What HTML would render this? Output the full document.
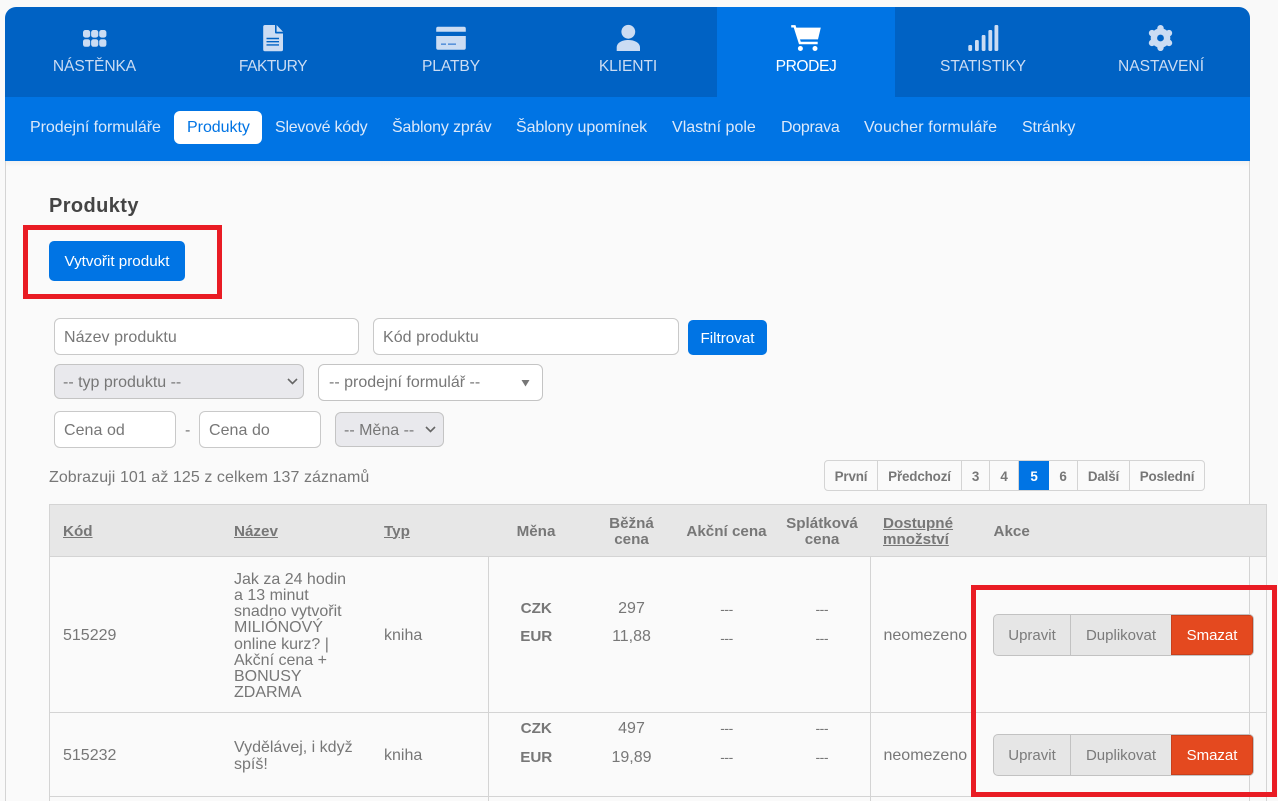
<!DOCTYPE html>
<html lang="cs">
<head>
<meta charset="utf-8">
<title>Produkty</title>
<style>
*{box-sizing:border-box}
html,body{margin:0;padding:0;width:1278px;height:801px;overflow:hidden;background:#f9f9f9}
body{position:relative;font-family:"Liberation Sans",Arial,sans-serif;font-size:16px;color:#777}
.abs,.tab,.sub,input,.sel,.btn{position:absolute}
#panel{position:absolute;left:5px;top:161px;width:1245px;height:660px;background:#fafafa;border-left:1px solid #d4d4d4;border-right:1px solid #d4d4d4}
#shadow{position:absolute;left:6px;top:161px;width:1243px;height:6px;background:linear-gradient(#f1f1f1,#fafafa)}
#top{position:absolute;left:5px;top:7px;width:1245px;height:90px;background:#0062c4;border-radius:11px 11px 0 0}
#active{position:absolute;left:717px;top:7px;width:178px;height:90px;background:#0074e4}
#subbar{position:absolute;left:5px;top:97px;width:1245px;height:64px;background:#0074e4}
.tab{top:58px;height:18px;line-height:18px;width:178px;text-align:center;color:#cbdcf3;font-size:15.6px;letter-spacing:-.1px;white-space:nowrap}
.sub{top:119px;line-height:18px;color:#dce9fa;font-size:16px;letter-spacing:-.15px;white-space:nowrap}
#pill{position:absolute;left:174px;top:111px;width:88px;height:33px;background:#fff;border-radius:6px}
h1{position:absolute;left:49px;top:194px;margin:0;font-size:20px;letter-spacing:.4px;line-height:24px;font-weight:bold;color:#444;white-space:nowrap}
.red{position:absolute;border:5px solid #e91c24;z-index:5}
.btn{background:#0074e4;color:#fff;border-radius:5px;text-align:center;font-size:15.2px;white-space:nowrap}
input{border:1px solid #c9c9c9;border-radius:6px;background:#fff;padding:2px 9px 0;font:16px "Liberation Sans",Arial,sans-serif;letter-spacing:.05px;color:#777;outline:0}
input::placeholder{color:#777;opacity:1}
.sel{border:1px solid #c4c4c4;border-radius:6px;background:#e9e9ed;color:#777;padding-left:8px;white-space:nowrap}
.sel svg{position:absolute;top:0;right:0}
#pager{position:absolute;left:824px;top:460px;width:381px;height:31px;display:flex;background:#fafafa;border:1px solid #d4d4d4;border-radius:4px;font-weight:bold;font-size:13.4px;letter-spacing:-.15px;line-height:31px;color:#777;text-align:center;overflow:hidden}
#pager span{display:block;border-right:1px solid #d4d4d4;flex:none;white-space:nowrap}
#pager span:last-child{border-right:0;flex:1}
#pager .on{background:#0074e4;color:#fff;border-right:0}
table{position:absolute;left:49px;top:504px;width:1218px;border-collapse:collapse;table-layout:fixed;font-size:16px;color:#777}
th{height:52px;background:#e7e7e7;border-top:1px solid #d4d4d4;border-bottom:1px solid #d4d4d4;font-weight:bold;font-size:15.2px;line-height:16px;color:#777;padding:2px 0 0;vertical-align:middle}
th.l{text-align:left;padding-left:13px}
th u{text-decoration:underline}
td{border-bottom:1px solid #d4d4d4;padding:0;vertical-align:middle;line-height:16.1px}
td.l{padding-left:13px;padding-top:4px}
td.bl{border-left:1px solid #d4d4d4}
td.c{text-align:center;vertical-align:top}
td.c b{font-size:15.2px}
.r1 td.c{padding-top:38px;line-height:28px}
.r2 td.c{padding-top:1px;line-height:29px}
tr>:nth-child(2).l,tr>:nth-child(3).l,tr>:nth-child(8).l{padding-left:12.5px}
.edge{border-left:1px solid #d4d4d4;border-right:1px solid #d4d4d4}
.dash{color:#777;letter-spacing:-.5px;font-size:14px}
.grp{position:absolute;left:993px;width:261px;height:42px;border:1px solid #c2c2c2;border-radius:5px;background:#e6e6e6;display:flex;font-size:15px;line-height:41px;text-align:center;overflow:hidden;z-index:3;color:#7b7b7b}
.grp span{display:block;flex:none}
.grp .a{width:77px;border-right:1px solid #c2c2c2}
.grp .b{width:100px}
.grp .d{flex:1;background:#e4491f;color:#fff;box-shadow:inset 0 0 0 1px #c8401c}
</style>
</head>
<body>
<div id="panel"></div>
<div id="shadow"></div>

<nav>
<div id="top"></div>
<div id="active"></div>
<svg class="abs" style="left:0;top:0" width="1278" height="60" viewBox="0 0 1278 60">
  <g fill="#cbdcf3">
    <rect x="83" y="30" width="7.2" height="7.6" rx="2.4"/><rect x="91.1" y="30" width="7.2" height="7.6" rx="2.4"/><rect x="99.2" y="30" width="7.2" height="7.6" rx="2.4"/>
    <rect x="83" y="39.2" width="7.2" height="7.6" rx="2.4"/><rect x="91.1" y="39.2" width="7.2" height="7.6" rx="2.4"/><rect x="99.2" y="39.2" width="7.2" height="7.6" rx="2.4"/>
    <path d="M265 25H275V32.5a1 1 0 0 0 1 1H283V49.5a1.8 1.8 0 0 1-1.8 1.8H265a1.8 1.8 0 0 1-1.8-1.8V26.8A1.8 1.8 0 0 1 265 25Z"/>
    <path d="M276.6 25L283 31.8H276.6Z"/>
    <path d="M438 26.7H464a1.8 1.8 0 0 1 1.8 1.8V31.8H436.2V28.5A1.8 1.8 0 0 1 438 26.7Z"/>
    <path d="M436.2 36H465.8V47.9a1.8 1.8 0 0 1-1.8 1.8H438a1.8 1.8 0 0 1-1.8-1.8Z"/>
    <circle cx="628.3" cy="31.8" r="6.9"/>
    <path d="M616.7 51V47.5C616.7 42.8 622 40 628.3 40S640 42.8 640 47.5V51Z"/>
    <rect x="968.3" y="45" width="3.8" height="6" rx="1.2"/><rect x="975" y="40" width="3.8" height="11" rx="1.2"/><rect x="981.7" y="35" width="3.8" height="16" rx="1.2"/><rect x="988.4" y="30" width="3.8" height="21" rx="1.2"/><rect x="994.5" y="25" width="3.8" height="26" rx="1.2"/>
    <circle cx="1160.5" cy="38" r="9.8"/>
  </g>
  <g stroke="#0062c4" stroke-width="1.4" fill="none"><path d="M266.5 38.5H279M266.5 41.7H279M266.5 44.9H279"/></g>
  <g stroke="#5a93da" stroke-width="1.6" fill="none"><path d="M441 44.2H446M448 44.2H456"/></g>
  <g stroke="#cbdcf3" stroke-width="6.4" stroke-linecap="round">
    <path d="M1160.5 28.2V47.8M1152 33.1L1169 42.9M1169 33.1L1152 42.9"/>
  </g>
  <circle cx="1160.5" cy="38" r="3.4" fill="#0062c4"/>
  <path d="M795.8 27.6H820.8L818 39.4H799.2Z" fill="#fff"/>
  <path d="M791.2 26.3H794.6L799.9 43H817.7" fill="none" stroke="#fff" stroke-width="2.4"/>
  <circle cx="800.4" cy="48.5" r="2.5" fill="#fff"/><circle cx="815" cy="48.5" r="2.5" fill="#fff"/>
</svg>
<div class="tab" style="left:5.5px">NÁSTĚNKA</div>
<div class="tab" style="left:184px;letter-spacing:-.5px">FAKTURY</div>
<div class="tab" style="left:362px">PLATBY</div>
<div class="tab" style="left:539px">KLIENTI</div>
<div class="tab" style="left:717px;color:#fff;letter-spacing:-.4px">PRODEJ</div>
<div class="tab" style="left:894px">STATISTIKY</div>
<div class="tab" style="left:1072px;letter-spacing:0">NASTAVENÍ</div>
<div id="subbar"></div>
<div id="pill"></div>
<div class="sub" style="left:30px;letter-spacing:-.04px">Prodejní formuláře</div>
<div class="sub" style="left:187px;color:#0074e4;letter-spacing:-.03px">Produkty</div>
<div class="sub" style="left:275px;letter-spacing:-.23px">Slevové kódy</div>
<div class="sub" style="left:392px">Šablony zpráv</div>
<div class="sub" style="left:516px;letter-spacing:-.09px">Šablony upomínek</div>
<div class="sub" style="left:672px;letter-spacing:.02px">Vlastní pole</div>
<div class="sub" style="left:781px;letter-spacing:-.29px">Doprava</div>
<div class="sub" style="left:864px;letter-spacing:.14px">Voucher formuláře</div>
<div class="sub" style="left:1022px">Stránky</div>
</nav>

<h1>Produkty</h1>
<div class="btn" style="left:49px;top:241px;width:136px;height:40px;line-height:42px">Vytvořit produkt</div>
<div class="red" style="left:23px;top:225px;width:199px;height:74px"></div>

<input style="left:54px;top:318px;width:305px;height:37px" placeholder="Název produktu">
<input style="left:373px;top:318px;width:306px;height:37px" placeholder="Kód produktu">
<div class="btn" style="left:688px;top:320px;width:79px;height:35px;line-height:37px">Filtrovat</div>
<div class="sel" style="left:54px;top:364px;width:250px;height:35px;line-height:35px">-- typ produktu --
  <svg width="24" height="33" viewBox="0 0 24 33"><path d="M9 14L13.5 18.5L18 14" fill="none" stroke="#666" stroke-width="1.6"/></svg></div>
<div class="sel" style="left:318px;top:364px;width:225px;height:37px;line-height:36px;background:#fff;padding-left:10px">-- prodejní formulář --
  <svg width="30" height="35" viewBox="0 0 30 35"><path d="M9.5 15H17.5L13.5 21.5Z" fill="#777"/></svg></div>
<input style="left:54px;top:411px;width:122px;height:37px" placeholder="Cena od">
<div class="abs" style="left:185px;top:422px;line-height:18px">-</div>
<input style="left:199px;top:411px;width:122px;height:37px" placeholder="Cena do">
<div class="sel" style="left:335px;top:412px;width:109px;height:35px;line-height:35px">-- Měna --
  <svg width="24" height="33" viewBox="0 0 24 33"><path d="M7 14L11.5 18.5L16 14" fill="none" stroke="#666" stroke-width="1.6"/></svg></div>

<div class="abs" style="left:49px;top:469px;line-height:18px;letter-spacing:.07px;white-space:nowrap">Zobrazuji 101 až 125 z celkem 137 záznamů</div>

<div id="pager">
  <span style="width:53px">První</span>
  <span style="width:84px">Předchozí</span>
  <span style="width:28px">3</span>
  <span style="width:29px">4</span>
  <span class="on" style="width:30px">5</span>
  <span style="width:29px">6</span>
  <span style="width:52px">Další</span>
  <span>Poslední</span>
</div>

<table class="edge">
<colgroup><col style="width:172px"><col style="width:150px"><col style="width:117px"><col style="width:95px"><col style="width:96px"><col style="width:94px"><col style="width:97px"><col style="width:110px"><col></colgroup>
<thead><tr>
<th class="l"><u>Kód</u></th><th class="l"><u>Název</u></th><th class="l"><u>Typ</u></th>
<th>Měna</th><th>Běžná<br>cena</th><th>Akční cena</th><th>Splátková<br>cena</th>
<th class="l"><u>Dostupné<br>množství</u></th><th class="l">Akce</th>
</tr></thead>
<tbody>
<tr class="r1" style="height:156px">
<td class="l">515229</td>
<td class="l">Jak za 24 hodin<br>a 13 minut<br>snadno vytvořit<br>MILIÓNOVÝ<br>online kurz? |<br>Akční cena +<br>BONUSY<br>ZDARMA</td>
<td class="l">kniha</td>
<td class="c bl"><b>CZK</b><br><b>EUR</b></td>
<td class="c">297<br>11,88</td>
<td class="c"><span class="dash">---</span><br><span class="dash">---</span></td>
<td class="c"><span class="dash">---</span><br><span class="dash">---</span></td>
<td class="l bl">neomezeno</td>
<td></td>
</tr>
<tr class="r2" style="height:84px">
<td class="l">515232</td>
<td class="l">Vydělávej, i když<br>spíš!</td>
<td class="l">kniha</td>
<td class="c bl"><b>CZK</b><br><b>EUR</b></td>
<td class="c">497<br>19,89</td>
<td class="c"><span class="dash">---</span><br><span class="dash">---</span></td>
<td class="c"><span class="dash">---</span><br><span class="dash">---</span></td>
<td class="l bl">neomezeno</td>
<td></td>
</tr>
<tr style="height:20px"><td></td><td></td><td></td><td class="bl"></td><td></td><td></td><td></td><td class="bl"></td><td></td></tr>
</tbody>
</table>
<div class="abs" style="left:1249px;top:712px;width:1px;height:84px;background:#d4d4d4"></div>

<div class="grp" style="top:614px"><span class="a">Upravit</span><span class="b">Duplikovat</span><span class="d">Smazat</span></div>
<div class="grp" style="top:734px"><span class="a">Upravit</span><span class="b">Duplikovat</span><span class="d">Smazat</span></div>
<div class="red" style="left:971px;top:585px;width:306px;height:212px"></div>
</body>
</html>
